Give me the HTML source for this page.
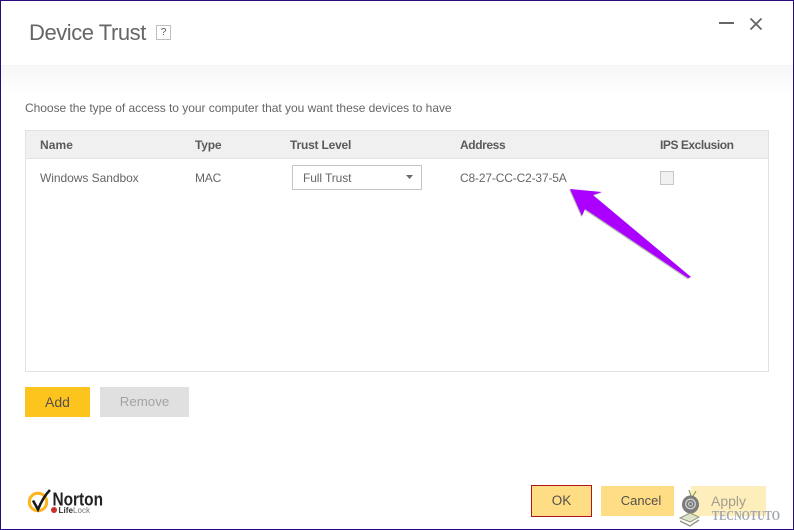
<!DOCTYPE html>
<html>
<head>
<meta charset="utf-8">
<style>
html,body{margin:0;padding:0;background:#fff}
#p{position:relative;width:794px;height:530px;overflow:hidden;background:#fff;font-family:"Liberation Sans",sans-serif;color:#5f5f5f;font-size:12px}
#p div{position:absolute;white-space:nowrap}
.b{font-weight:bold;color:#5a5a5a;font-size:12px;line-height:14px;top:138px;letter-spacing:-.2px}
.r{color:#666;font-size:12px;line-height:14px;top:171px}
.btn{text-align:center;font-size:14px}
</style>
</head>
<body>
<div id="p">
  <div style="left:0;top:65px;width:794px;height:28px;background:linear-gradient(#f6f6f6,#fff)"></div>

  <div style="left:29px;top:20px;font-size:22px;line-height:26px;color:#666;letter-spacing:-.45px">Device Trust</div>
  <div style="left:156px;top:25px;width:13px;height:13px;border:1px solid #bdbdbd;text-align:center;font-size:10px;line-height:13px;color:#555">?</div>

  <div style="left:719px;top:22px;width:15px;height:2px;background:#666"></div>
  <svg style="position:absolute;left:749px;top:17px" width="14" height="14" viewBox="0 0 14 14"><path d="M1.5 1.5L12.5 12.5M12.5 1.5L1.5 12.5" stroke="#666" stroke-width="1.8" fill="none"/></svg>

  <div style="left:25px;top:101px;font-size:12px;line-height:14px;color:#666;letter-spacing:-.03px">Choose the type of access to your computer that you want these devices to have</div>

  <div style="left:25px;top:130px;width:742px;height:240px;border:1px solid #e2e2e2"></div>
  <div style="left:26px;top:131px;width:742px;height:27px;background:#f0f0f0;border-bottom:1px solid #e2e2e2"></div>

  <div class="b" style="left:40px;letter-spacing:.1px">Name</div>
  <div class="b" style="left:195px">Type</div>
  <div class="b" style="left:290px">Trust Level</div>
  <div class="b" style="left:460px;letter-spacing:-.4px">Address</div>
  <div class="b" style="left:660px;letter-spacing:-.45px">IPS Exclusion</div>

  <div class="r" style="left:40px;letter-spacing:-.05px">Windows Sandbox</div>
  <div class="r" style="left:195px;letter-spacing:-.2px">MAC</div>

  <div style="left:292px;top:165px;width:128px;height:23px;border:1px solid #c4c4c4;background:#fff"></div>
  <div class="r" style="left:303px;letter-spacing:-.1px">Full Trust</div>
  <svg style="position:absolute;left:405px;top:175px" width="8" height="5"><path d="M1 0H8L4.5 4Z" fill="#6a6a6a"/></svg>

  <div class="r" style="left:460px;letter-spacing:-.16px">C8-27-CC-C2-37-5A</div>

  <div style="left:660px;top:171px;width:12px;height:12px;border:1px solid #c6c6c6;background:#f1f1f1"></div>

  <svg style="position:absolute;left:0;top:0" width="794" height="530">
    <path d="M570 189L602 192L593 195L691 277L688 278L585 209L582 216Z" fill="#5a6a50" opacity=".45" transform="translate(-.7 1)"/>
    <path d="M570 189L602 192L593 195L691 277L688 278L585 209L582 216Z" fill="#ab00ff"/>
  </svg>

  <div class="btn" style="left:25px;top:387px;width:65px;height:30px;line-height:30px;background:#fec41e;color:#55504a">Add</div>
  <div class="btn" style="left:100px;top:387px;width:89px;height:30px;line-height:30px;background:#e0e0e0;color:#a3a3a3;font-size:13.3px">Remove</div>

  <!-- Norton logo -->
  <svg style="position:absolute;left:0;top:0" width="794" height="530">
    <circle cx="38" cy="502" r="8.7" fill="none" stroke="#fdb51b" stroke-width="3"/>
    <path d="M33 500.5L38 509.5C41 502 45 495 50 490" fill="none" stroke="#1a1a1a" stroke-width="2.6"/>
    <text x="52.5" y="505.5" font-family="Liberation Sans,sans-serif" font-size="18" font-weight="bold" fill="#222" textLength="50.5" lengthAdjust="spacingAndGlyphs">Norton</text>
    <circle cx="54" cy="510" r="3" fill="#c8322c"/>
    <text x="58.5" y="513" font-family="Liberation Sans,sans-serif" font-size="8" font-weight="bold" fill="#333" textLength="14.5" lengthAdjust="spacingAndGlyphs">Life</text>
    <text x="73" y="513" font-family="Liberation Sans,sans-serif" font-size="8" fill="#777" textLength="17" lengthAdjust="spacingAndGlyphs">Lock</text>
  </svg>

  <div class="btn" style="left:531px;top:485px;width:59px;height:30px;line-height:30px;background:#fedd85;border:1px solid #b3141a;color:#55504a;font-size:13.5px">OK</div>
  <div class="btn" style="left:601px;top:486px;width:80px;height:30px;line-height:30px;background:#fedd85;color:#55504a;font-size:13px">Cancel</div>
  <div style="left:674px;top:486px;width:17px;height:30px;background:#fff"></div>
  <div class="btn" style="left:691px;top:486px;width:75px;height:30px;line-height:30px;background:#feeebc;color:#a29c8e">Apply</div>

  <!-- Watermark -->
  <svg style="position:absolute;left:0;top:0" width="794" height="530">
    <path d="M691 496L689 490M693 496L696 491" stroke="#8a9a60" stroke-width="1.2" fill="none"/>
    <ellipse cx="690.5" cy="504.5" rx="8.5" ry="9" fill="#7b7b7b"/>
    <circle cx="690.5" cy="504" r="4.8" fill="none" stroke="#cfcfcf" stroke-width="1.3"/>
    <circle cx="690.5" cy="504" r="2" fill="none" stroke="#cfcfcf" stroke-width="1"/>
    <path d="M680 518L690 513L699 517L690 522Z" fill="#dfe3c8" stroke="#8f957c"/>
    <path d="M680 521L690 526L699 520" fill="none" stroke="#8f957c" stroke-width="1.4"/>
    <text x="712" y="520" font-family="Liberation Serif,serif" font-weight="bold" font-size="14" fill="#a2a7ac" textLength="68" lengthAdjust="spacingAndGlyphs">TECNOTUTO</text>
  </svg>

  <!-- window border -->
  <div style="left:0;top:0;width:792px;height:528px;border:1px solid #2b0a80"></div>
</div>
</body>
</html>
